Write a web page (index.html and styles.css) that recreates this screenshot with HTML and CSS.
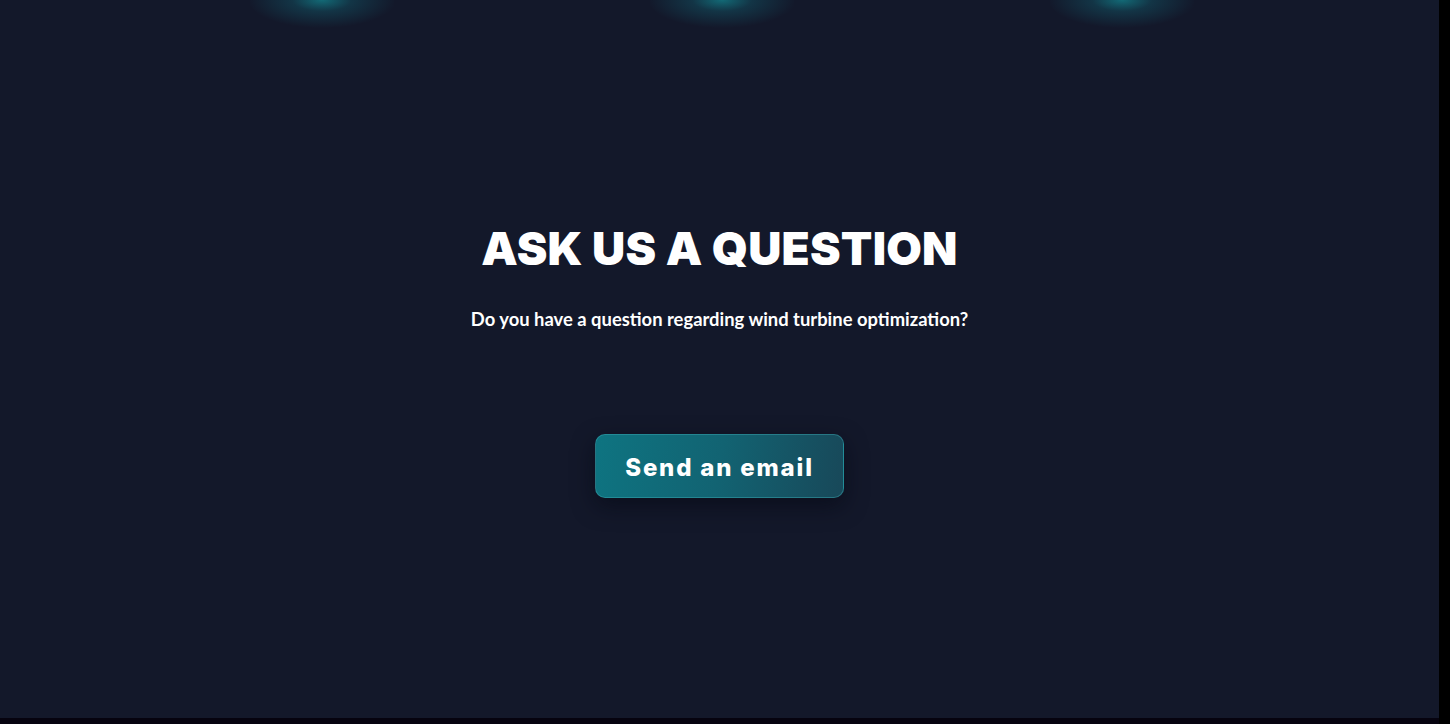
FILE: index.html
```html
<!DOCTYPE html>
<html lang="en">
<head>
<meta charset="utf-8">
<title>Ask us a question</title>
<link rel="stylesheet" href="styles.css">
</head>
<body>
<div class="frame">
  <div class="main">
    <section class="contact">
      <div class="glows">
        <span class="glow"></span>
        <span class="glow"></span>
        <span class="glow"></span>
      </div>
      <div class="content">
        <h2 class="title">ASK US A QUESTION</h2>
        <p class="lead">Do you have a question regarding wind turbine optimization?</p>
        <a class="btn" href="#">Send an email</a>
      </div>
    </section>
    <div class="bottom"></div>
  </div>
  <div class="rail"></div>
</div>
</body>
</html>
```
FILE: styles.css
```css
html, body {
  margin: 0;
  padding: 0;
  height: 100%;
  background: #13182a;
}
.frame {
  display: flex;
  height: 724px;
  overflow: hidden;
}
.main {
  flex: 1;
  display: flex;
  flex-direction: column;
}
.rail {
  width: 11px;
  background: #000;
}
.contact {
  flex: 1;
  background: #13182a;
  display: flex;
  flex-direction: column;
}
.bottom {
  height: 6px;
  background: #06030f;
}
.glows {
  display: flex;
  justify-content: center;
  gap: 256px;
  height: 40px;
  margin-left: 4px;
}
.glow {
  width: 144px;
  height: 40px;
  background: radial-gradient(ellipse 74px 28px at 50% 0%, rgba(18,140,150,0.7) 0%, rgba(18,120,135,0.3) 40%, rgba(19,24,42,0) 100%);
}
.content {
  display: flex;
  flex-direction: column;
  align-items: center;
  padding-top: 180px;
}
.title {
  margin: 0;
  font-family: "Inter", "Liberation Sans", sans-serif;
  font-weight: 900;
  font-size: 46px;
  line-height: 56px;
  color: #fff;
  letter-spacing: 0.2px;
}
.lead {
  margin: 30px 0 0;
  font-family: "Lato", "Liberation Sans", sans-serif;
  font-weight: 700;
  font-size: 18.4px;
  line-height: 26px;
  color: #fff;
}
.btn {
  margin-top: 102px;
  width: 247px;
  height: 60px;
  padding-top: 2px;
  box-sizing: content-box;
  display: flex;
  align-items: center;
  justify-content: center;
  border-radius: 10px;
  border: 1px solid rgba(60,170,180,0.45);
  background: linear-gradient(100deg, #0e7481 0%, #126372 50%, #184859 100%);
  box-shadow: 0 8px 22px rgba(5,8,18,0.55);
  font-family: "Inter", "Liberation Sans", sans-serif;
  font-weight: 800;
  font-size: 24px;
  letter-spacing: 1.8px;
  color: #fff;
  text-decoration: none;
}
```
